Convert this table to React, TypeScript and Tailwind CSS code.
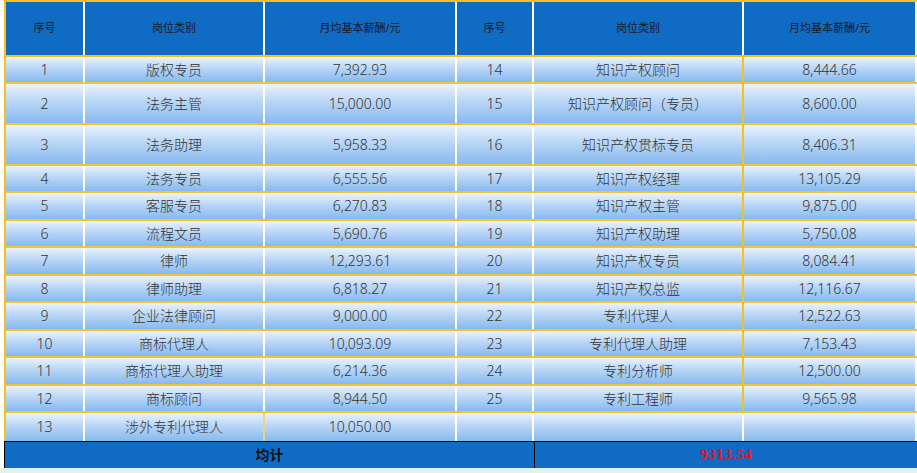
import React from "react";

type Row = { no: string; name: string; pay: string };

const leftRows: Row[] = [
  { no: "1", name: "版权专员", pay: "7,392.93" },
  { no: "2", name: "法务主管", pay: "15,000.00" },
  { no: "3", name: "法务助理", pay: "5,958.33" },
  { no: "4", name: "法务专员", pay: "6,555.56" },
  { no: "5", name: "客服专员", pay: "6,270.83" },
  { no: "6", name: "流程文员", pay: "5,690.76" },
  { no: "7", name: "律师", pay: "12,293.61" },
  { no: "8", name: "律师助理", pay: "6,818.27" },
  { no: "9", name: "企业法律顾问", pay: "9,000.00" },
  { no: "10", name: "商标代理人", pay: "10,093.09" },
  { no: "11", name: "商标代理人助理", pay: "6,214.36" },
  { no: "12", name: "商标顾问", pay: "8,944.50" },
  { no: "13", name: "涉外专利代理人", pay: "10,050.00" },
];

const rightRows: Row[] = [
  { no: "14", name: "知识产权顾问", pay: "8,444.66" },
  { no: "15", name: "知识产权顾问（专员）", pay: "8,600.00" },
  { no: "16", name: "知识产权贯标专员", pay: "8,406.31" },
  { no: "17", name: "知识产权经理", pay: "13,105.29" },
  { no: "18", name: "知识产权主管", pay: "9,875.00" },
  { no: "19", name: "知识产权助理", pay: "5,750.08" },
  { no: "20", name: "知识产权专员", pay: "8,084.41" },
  { no: "21", name: "知识产权总监", pay: "12,116.67" },
  { no: "22", name: "专利代理人", pay: "12,522.63" },
  { no: "23", name: "专利代理人助理", pay: "7,153.43" },
  { no: "24", name: "专利分析师", pay: "12,500.00" },
  { no: "25", name: "专利工程师", pay: "9,565.98" },
  { no: "", name: "", pay: "" },
];

// rows 2 and 3 are taller in the source sheet
const rowHeights = [
  "h-[27px]",
  "h-[41px]",
  "h-[41px]",
  "h-[27px]",
  "h-[27.5px]",
  "h-[27.5px]",
  "h-[27.5px]",
  "h-[27.5px]",
  "h-[27.5px]",
  "h-[27.5px]",
  "h-[27.5px]",
  "h-[27.5px]",
  "h-[27.5px]",
];

const widths = ["w-[79px]", "w-[180px]", "w-[192px]", "w-[77px]", "w-[210px]", "w-[171px]"];

const cellBg = "bg-gradient-to-b from-[#eaf3fd] via-[#b9d6f6] via-45% to-[#86b9ef]";

function HeaderCell({ label, w, last }: { label: string; w: string; last?: boolean }) {
  return (
    <div
      className={`${w} shrink-0 flex items-center justify-center bg-[#106bc4] text-[11px] text-[#1a1a1a] ${
        last ? "" : "border-r-2 border-white"
      }`}
    >
      {label}
    </div>
  );
}

function BodyCell({ text, w, right }: { text: string; w: string; right: string }) {
  return (
    <div
      className={`${w} shrink-0 flex items-center justify-center ${cellBg} ${right} text-[14px] text-[#333]`}
    >
      {text}
    </div>
  );
}

export default function App() {
  return (
    <div
      className="w-[917px] h-[473px] overflow-hidden bg-white pl-[4px]"
      style={{ fontFamily: '"Noto Sans", "Noto Sans CJK SC", sans-serif' }}
    >
      <div className="flex flex-col border-l-2 border-[#f2c31c]">
        {/* header */}
        <div className="flex h-[57px] border-t-2 border-b-2 border-[#f2c31c]">
          <HeaderCell label="序号" w={widths[0]} />
          <HeaderCell label="岗位类别" w={widths[1]} />
          <HeaderCell label="月均基本薪酬/元" w={widths[2]} />
          <HeaderCell label="序号" w={widths[3]} />
          <HeaderCell label="岗位类别" w={widths[4]} />
          <HeaderCell label="月均基本薪酬/元" w={widths[5]} last />
        </div>

        {/* body rows */}
        {leftRows.map((l, i) => {
          const r = rightRows[i];
          const isLast = i === leftRows.length - 1;
          return (
            <div
              key={l.no}
              className={`flex ${rowHeights[i]} ${
                isLast ? "" : "border-b-2 border-[#f0c630]"
              } font-light`}
            >
              <BodyCell text={l.no} w={widths[0]} right="border-r-2 border-white" />
              <BodyCell
                text={l.name}
                w={widths[1]}
                right={isLast ? "border-r-2 border-[#ecd47a]" : "border-r-2 border-white"}
              />
              <BodyCell text={l.pay} w={widths[2]} right="border-r-2 border-white" />
              <BodyCell text={r.no} w={widths[3]} right="border-r-2 border-white" />
              <BodyCell
                text={r.name}
                w={widths[4]}
                right={isLast ? "border-r-2 border-white" : "border-r-2 border-[#f2c31c]"}
              />
              <BodyCell text={r.pay} w={widths[5]} right="" />
            </div>
          );
        })}
      </div>

      {/* summary */}
      <div className="flex h-[27px] border-t border-black">
        <div className="w-[531px] shrink-0 flex items-center justify-center bg-[#106bc4] border-l border-r border-black text-[14px] font-bold text-[#111]">
          均计
        </div>
        <div
          className="flex-1 flex items-center justify-center bg-[#106bc4] text-[15px] font-bold text-[#e0102a] tracking-[0.5px]"
          style={{ fontFamily: '"Liberation Serif", serif' }}
        >
          9313.54
        </div>
      </div>
      <div className="h-[10px] bg-[#def3ea] -ml-[4px]" />
    </div>
  );
}
